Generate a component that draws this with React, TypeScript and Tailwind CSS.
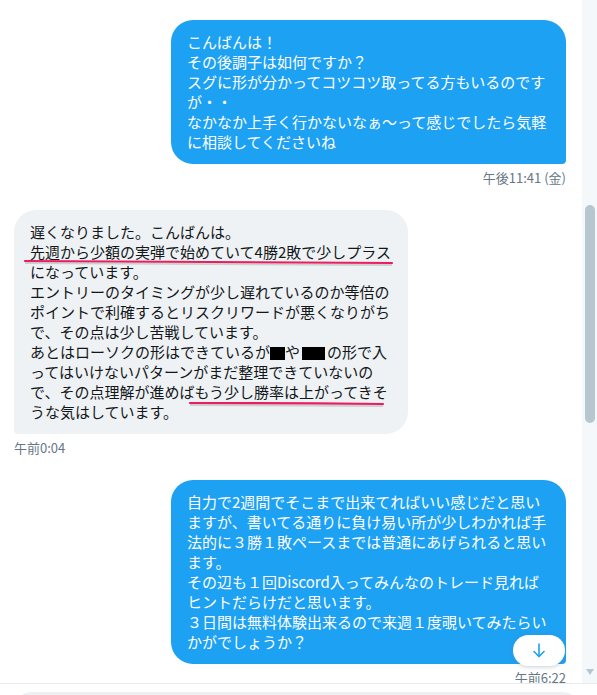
import React from "react";

const sent1 = [
  "こんばんは！",
  "その後調子は如何ですか？",
  "スグに形が分かってコツコツ取ってる方もいるのです",
  "が・・",
  "なかなか上手く行かないなぁ～って感じでしたら気軽",
  "に相談してくださいね",
];

const sent2 = [
  "自力で2週間でそこまで出来てればいい感じだと思い",
  "ますが、書いてる通りに負け易い所が少しわかれば手",
  "法的に３勝１敗ペースまでは普通にあげられると思い",
  "ます。",
  "その辺も１回Discord入ってみんなのトレード見れば",
  "ヒントだらけだと思います。",
  "３日間は無料体験出来るので来週１度覗いてみたらい",
  "かがでしょうか？",
];

function Box({ w, bw, ml }: { w: string; bw: string; ml: string }) {
  return (
    <span className={`inline-block h-[20px] align-top ${w}`}>
      <span className={`block mt-[5px] h-[13px] bg-black ${bw} ${ml}`} />
    </span>
  );
}

export default function App() {
  return (
    <div className="w-[597px] h-[695px] overflow-hidden bg-white flex flex-col font-['Noto_Sans_CJK_JP',sans-serif]">
      <div className="h-[683px] shrink-0 flex">
        <div className="flex-1 relative overflow-hidden pt-[20px]">
          {/* sent 1 */}
          <div className="flex flex-col items-end pr-[16px]">
            <div className="w-[395px] bg-[#1da1f2] text-white text-[15px] leading-[20px] px-[16px] py-[12px] rounded-tl-[22px] rounded-tr-[22px] rounded-bl-[22px] rounded-br-[4px]">
              {sent1.map((l, i) => (
                <div key={i} className="whitespace-nowrap">{l}</div>
              ))}
            </div>
            <div className="mt-[6px] text-[13px] leading-[16px] text-[#657786]">午後11:41 (金)</div>
          </div>

          {/* received */}
          <div className="mt-[24px] flex flex-col items-start pl-[14px]">
            <div className="relative w-[394px] bg-[#eef2f4] text-[#14171a] text-[15px] leading-[20px] px-[16px] py-[12px] rounded-tl-[22px] rounded-tr-[22px] rounded-br-[22px] rounded-bl-[4px]">
              <div className="whitespace-nowrap">遅くなりました。こんばんは。</div>
              <div className="whitespace-nowrap">先週から少額の実弾で始めていて4勝2敗で少しプラス</div>
              <div className="whitespace-nowrap">になっています。</div>
              <div className="whitespace-nowrap">エントリーのタイミングが少し遅れているのか等倍の</div>
              <div className="whitespace-nowrap">ポイントで利確するとリスクリワードが悪くなりがち</div>
              <div className="whitespace-nowrap">で、その点は少し苦戦しています。</div>
              <div className="whitespace-nowrap">
                あとはローソクの形はできているが
                <Box w="w-[15px]" bw="w-[15px]" ml="ml-0" />
                や
                <Box w="w-[27px]" bw="w-[23px]" ml="ml-[2px]" />
                の形で入
              </div>
              <div className="whitespace-nowrap">ってはいけないパターンがまだ整理できていないの</div>
              <div className="whitespace-nowrap">で、その点理解が進めばもう少し勝率は上がってきそ</div>
              <div className="whitespace-nowrap">うな気はしています。</div>
              <svg className="absolute left-0 top-0 pointer-events-none" width="394" height="223" viewBox="0 0 394 223">
                <path d="M11 53 L378 55" stroke="#6b6b6b" strokeOpacity="0.25" strokeWidth="2" fill="none" />
                <path d="M11 51 Q200 51.5 378 53" stroke="#ea1d5d" strokeWidth="2.2" strokeLinecap="round" fill="none" />
                <path d="M176 195 L369 196" stroke="#6b6b6b" strokeOpacity="0.25" strokeWidth="2" fill="none" />
                <path d="M176 193 Q270 193 369 194" stroke="#ea1d5d" strokeWidth="2.2" strokeLinecap="round" fill="none" />
              </svg>
            </div>
            <div className="mt-[6px] text-[13px] leading-[16px] text-[#657786]">午前0:04</div>
          </div>

          {/* sent 2 */}
          <div className="mt-[24px] flex flex-col items-end pr-[16px]">
            <div className="w-[395px] bg-[#1da1f2] text-white text-[15px] leading-[20px] px-[16px] py-[12px] rounded-tl-[22px] rounded-tr-[22px] rounded-bl-[22px] rounded-br-[4px]">
              {sent2.map((l, i) => (
                <div key={i} className="whitespace-nowrap">{l}</div>
              ))}
            </div>
            <div className="mt-[6px] text-[13px] leading-[16px] text-[#657786]">午前6:22</div>
          </div>

          {/* scroll down button */}
          <div className="absolute left-[513px] top-[635px] w-[52px] h-[31px] rounded-full bg-white shadow-[0_1px_4px_rgba(101,119,134,0.35)] flex items-center justify-center">
            <svg width="12" height="15" viewBox="0 0 12 15" fill="none" stroke="#1da1f2" strokeWidth="1.6" strokeLinecap="round" strokeLinejoin="round">
              <path d="M6 1 V13.5" />
              <path d="M1 8.5 L6 13.5 L11 8.5" />
            </svg>
          </div>
        </div>

        {/* scrollbar */}
        <div className="w-[15px] bg-[#f5f8fa] flex flex-col items-center">
          <div className="mt-[205px] w-[10px] h-[218px] rounded-full bg-[#b6c7d0]" />
          <div className="mt-auto mb-[8px] w-0 h-0 border-l-[4.5px] border-r-[4.5px] border-t-[6px] border-l-transparent border-r-transparent border-t-[#b6c7d0]" />
        </div>
      </div>

      {/* composer */}
      <div className="flex-1 border-t border-[#e6ecf0] pt-[8px] pl-[15px] pr-[18px]">
        <div className="h-[30px] rounded-t-[16px] bg-[#eef1f3]" />
      </div>
    </div>
  );
}
